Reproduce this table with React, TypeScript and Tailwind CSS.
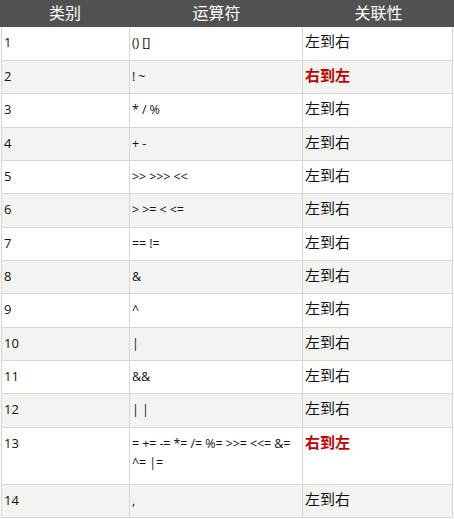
import React from "react";

const rows = [
  { id: "1", op: ["() []"], dir: "左到右", h: "h-[34px]" },
  { id: "2", op: ["! ~"], dir: "右到左", red: true, h: "h-[33px]" },
  { id: "3", op: ["* / %"], dir: "左到右", h: "h-[34px]" },
  { id: "4", op: ["+ -"], dir: "左到右", h: "h-[33px]" },
  { id: "5", op: [">> >>> <<"], dir: "左到右", h: "h-[33px]" },
  { id: "6", op: ["> >= < <="], dir: "左到右", h: "h-[34px]" },
  { id: "7", op: ["== !="], dir: "左到右", h: "h-[33px]" },
  { id: "8", op: ["&"], dir: "左到右", h: "h-[33px]" },
  { id: "9", op: ["^"], dir: "左到右", h: "h-[34px]" },
  { id: "10", op: ["|"], dir: "左到右", h: "h-[33px]" },
  { id: "11", op: ["&&"], dir: "左到右", h: "h-[33px]" },
  { id: "12", op: ["| |"], dir: "左到右", h: "h-[34px]" },
  { id: "13", op: ["= += -= *= /= %= >>= <<= &=", "^= |="], dir: "右到左", red: true, h: "h-[57px]" },
  { id: "14", op: [","], dir: "左到右", h: "h-[33px]" },
];

export default function App() {
  return (
    <div className="w-[454px] bg-white font-['Open_Sans','Noto_Sans_CJK_SC',sans-serif] text-[13px] text-[#111]">
      <div className="flex h-[27px] items-center bg-[#515151] pb-px text-[16px] text-white">
        <div className="w-[130px] text-center">类别</div>
        <div className="w-[173px] text-center">运算符</div>
        <div className="flex-1 text-center">关联性</div>
      </div>
      <div className="ml-px w-[452px] border-x border-[#d6d6d6]">
        {rows.map((r, i) => (
          <div
            key={r.id}
            className={`flex border-b border-[#d6d6d6] ${r.h} ${i % 2 === 1 ? "bg-[#f3f3ef]" : "bg-white"}`}
          >
            <div className="w-[128px] border-r border-[#d6d6d6] pl-[2px] pt-[5px] leading-5">{r.id}</div>
            <div className="w-[173px] overflow-hidden whitespace-nowrap border-r border-[#d6d6d6] pl-[2px] pt-[6px] text-[12.5px] leading-[19px] tracking-[-0.1px]">
              {r.op.map((line) => (
                <div key={line}>{line}</div>
              ))}
            </div>
            <div
              className={`flex-1 pl-[2px] pt-[4px] text-[15px] leading-5 ${r.red ? "font-bold text-[#c40000]" : ""}`}
            >
              {r.dir}
            </div>
          </div>
        ))}
      </div>
    </div>
  );
}
